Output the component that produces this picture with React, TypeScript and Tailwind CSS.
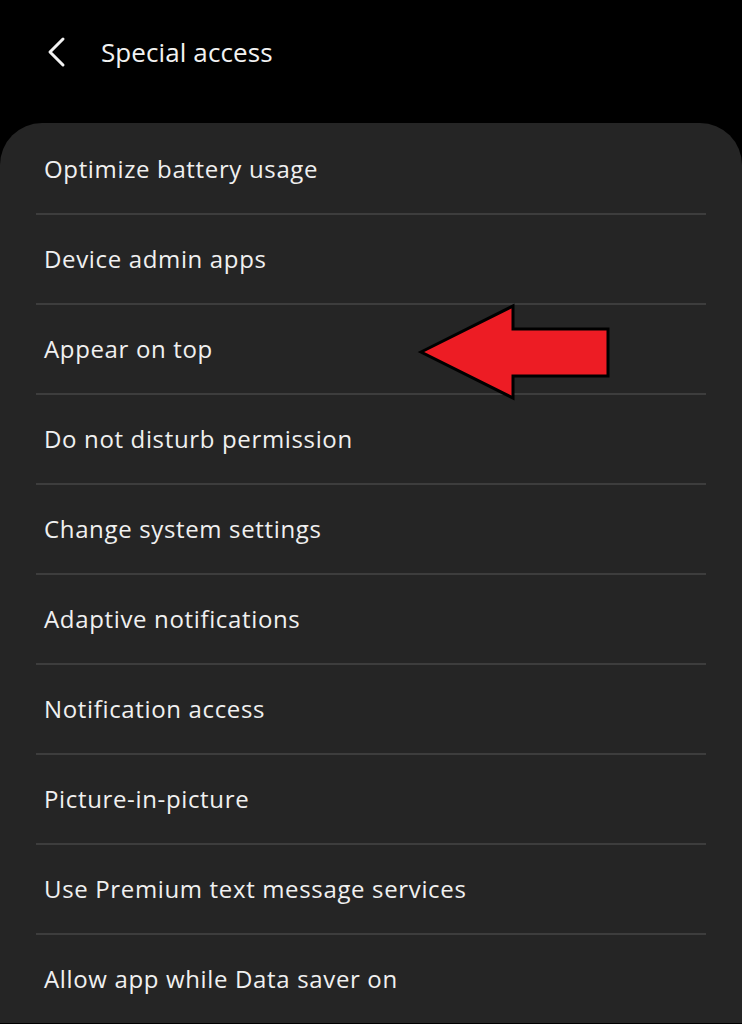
import React from "react";

const items = [
  "Optimize battery usage",
  "Device admin apps",
  "Appear on top",
  "Do not disturb permission",
  "Change system settings",
  "Adaptive notifications",
  "Notification access",
  "Picture-in-picture",
  "Use Premium text message services",
  "Allow app while Data saver on",
];

export default function App() {
  return (
    <div
      className="w-[742px] h-[1024px] overflow-hidden bg-black relative"
      style={{ fontFamily: '"Open Sans", "Noto Sans", sans-serif' }}
    >
      <div className="h-[123px] flex items-start pt-[24px]">
        <div className="flex items-center h-[56px]">
          <svg className="ml-[44px]" width="26" height="32" viewBox="0 0 26 32">
            <path d="M19 3 L6 16 L19 29" fill="none" stroke="#f2f2f2" strokeWidth="3" strokeLinecap="round" strokeLinejoin="round" />
          </svg>
          <span className="ml-[31px] text-[26px] text-[#f2f2f2] tracking-[0.1px]">Special access</span>
        </div>
      </div>
      <div className="bg-[#252525] rounded-t-[42px] flex flex-col">
        {items.map((t, i) => (
          <div key={t} className="flex flex-col">
            {i > 0 && <div className="h-[2px] mx-[36px] bg-[#3d3d3d]" />}
            <div className={`${i === 0 ? "h-[90px] pt-[2px]" : "h-[88px]"} flex items-center pl-[44px] relative`}>
              <span className="text-[24px] text-[#f0f0f0] tracking-[0.65px]">{t}</span>
            </div>
          </div>
        ))}
      </div>
      <svg className="absolute left-[416px] top-[303px]" width="198" height="98" viewBox="0 0 198 98">
        <path
          d="M5 49 L97 3 L97 26 L192 26 L192 73 L97 73 L97 95 Z"
          fill="#ed1c24"
          stroke="#000"
          strokeWidth="3"
          strokeLinejoin="miter"
        />
      </svg>
    </div>
  );
}
